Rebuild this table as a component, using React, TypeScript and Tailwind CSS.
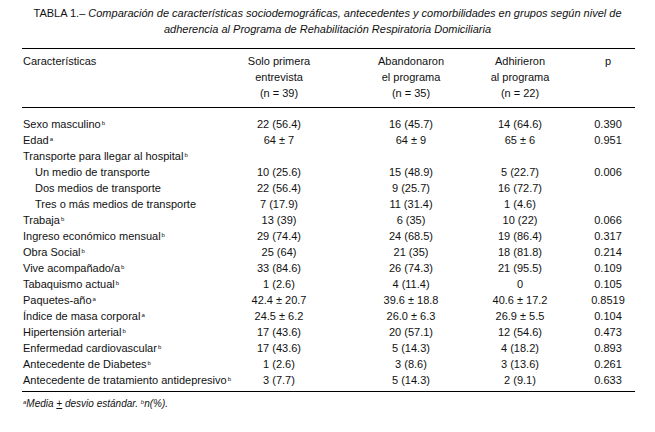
type Row = {
  label: string;
  mark?: 'a' | 'b';
  indent?: boolean;
  values: string[];
  p?: string;
};

const rows: Row[] = [
  { label: 'Sexo masculino', mark: 'b', values: ['22 (56.4)', '16 (45.7)', '14 (64.6)'], p: '0.390' },
  { label: 'Edad', mark: 'a', values: ['64 ± 7', '64 ± 9', '65 ± 6'], p: '0.951' },
  { label: 'Transporte para llegar al hospital', mark: 'b', values: ['', '', ''] },
  { label: 'Un medio de transporte', indent: true, values: ['10 (25.6)', '15 (48.9)', '5 (22.7)'], p: '0.006' },
  { label: 'Dos medios de transporte', indent: true, values: ['22 (56.4)', '9 (25.7)', '16 (72.7)'] },
  { label: 'Tres o más medios de transporte', indent: true, values: ['7 (17.9)', '11 (31.4)', '1 (4.6)'] },
  { label: 'Trabaja', mark: 'b', values: ['13 (39)', '6 (35)', '10 (22)'], p: '0.066' },
  { label: 'Ingreso económico mensual', mark: 'b', values: ['29 (74.4)', '24 (68.5)', '19 (86.4)'], p: '0.317' },
  { label: 'Obra Social', mark: 'b', values: ['25 (64)', '21 (35)', '18 (81.8)'], p: '0.214' },
  { label: 'Vive acompañado/a', mark: 'b', values: ['33 (84.6)', '26 (74.3)', '21 (95.5)'], p: '0.109' },
  { label: 'Tabaquismo actual', mark: 'b', values: ['1 (2.6)', '4 (11.4)', '0'], p: '0.105' },
  { label: 'Paquetes-año', mark: 'a', values: ['42.4 ± 20.7', '39.6 ± 18.8', '40.6 ± 17.2'], p: '0.8519' },
  { label: 'Índice de masa corporal', mark: 'a', values: ['24.5 ± 6.2', '26.0 ± 6.3', '26.9 ± 5.5'], p: '0.104' },
  { label: 'Hipertensión arterial', mark: 'b', values: ['17 (43.6)', '20 (57.1)', '12 (54.6)'], p: '0.473' },
  { label: 'Enfermedad cardiovascular', mark: 'b', values: ['17 (43.6)', '5 (14.3)', '4 (18.2)'], p: '0.893' },
  { label: 'Antecedente de Diabetes', mark: 'b', values: ['1 (2.6)', '3 (8.6)', '3 (13.6)'], p: '0.261' },
  { label: 'Antecedente de tratamiento antidepresivo', mark: 'b', values: ['3 (7.7)', '5 (14.3)', '2 (9.1)'], p: '0.633' },
];

// marcas a / b de la nota al pie
function Mark({ m }: { m?: 'a' | 'b' }) {
  if (!m) return null;
  return <sup className="text-[6px] ml-px top-[-3px]">{m}</sup>;
}

export default function App() {
  return (
    <main className="bg-white min-h-screen text-[#111] font-['Liberation_Sans',Arial,sans-serif] pt-[5px]">
      <h1 className="text-center text-[11px] leading-4 px-6">
        TABLA 1.– <i>Comparación de características sociodemográficas, antecedentes y comorbilidades en grupos según nivel de</i>
        <br />
        <i>adherencia al Programa de Rehabilitación Respiratoria Domiciliaria</i>
      </h1>

      <div className="ml-[22px] w-[613px] mt-[11px]">
        <table className="w-full table-fixed border-collapse text-[11px] leading-4">
          <colgroup>
            <col className="w-[173px]" />
            <col className="w-[168px]" />
            <col className="w-[96px]" />
            <col className="w-[122px]" />
            <col className="w-[54px]" />
          </colgroup>
          <thead>
            <tr className="border-t border-b border-black align-top">
              <th className="text-left font-normal pl-px pt-1 pb-[6px]">Características</th>
              <th className="font-normal pt-1 pb-[6px]">Solo primera<br />entrevista<br />(n = 39)</th>
              <th className="font-normal pt-1 pb-[6px]">Abandonaron<br />el programa<br />(n = 35)</th>
              <th className="font-normal pt-1 pb-[6px]">Adhirieron<br />al programa<br />(n = 22)</th>
              <th className="font-normal pt-1 pb-[6px]">p</th>
            </tr>
          </thead>
          <tbody>
            <tr className="h-[8px]"><td colSpan={5} /></tr>
            {rows.map(r => (
              <tr key={r.label} className="h-4">
                <td className={`whitespace-nowrap ${r.indent ? 'pl-[13px]' : 'pl-px'}`}>
                  {r.label}<Mark m={r.mark} />
                </td>
                {r.values.map((v, i) => (
                  <td key={i} className="text-center whitespace-nowrap">{v}</td>
                ))}
                <td className="text-center">{r.p}</td>
              </tr>
            ))}
            <tr className="h-1 border-b border-black"><td colSpan={5} /></tr>
          </tbody>
        </table>
        <p className="text-[10px] leading-4 italic mt-[4px] pl-px">
          <sup className="text-[6px] top-[-3px]">a</sup>Media <span className="underline">+</span> desvio estándar. <sup className="text-[6px] top-[-3px]">b</sup>n(%).
        </p>
      </div>
    </main>
  );
}
